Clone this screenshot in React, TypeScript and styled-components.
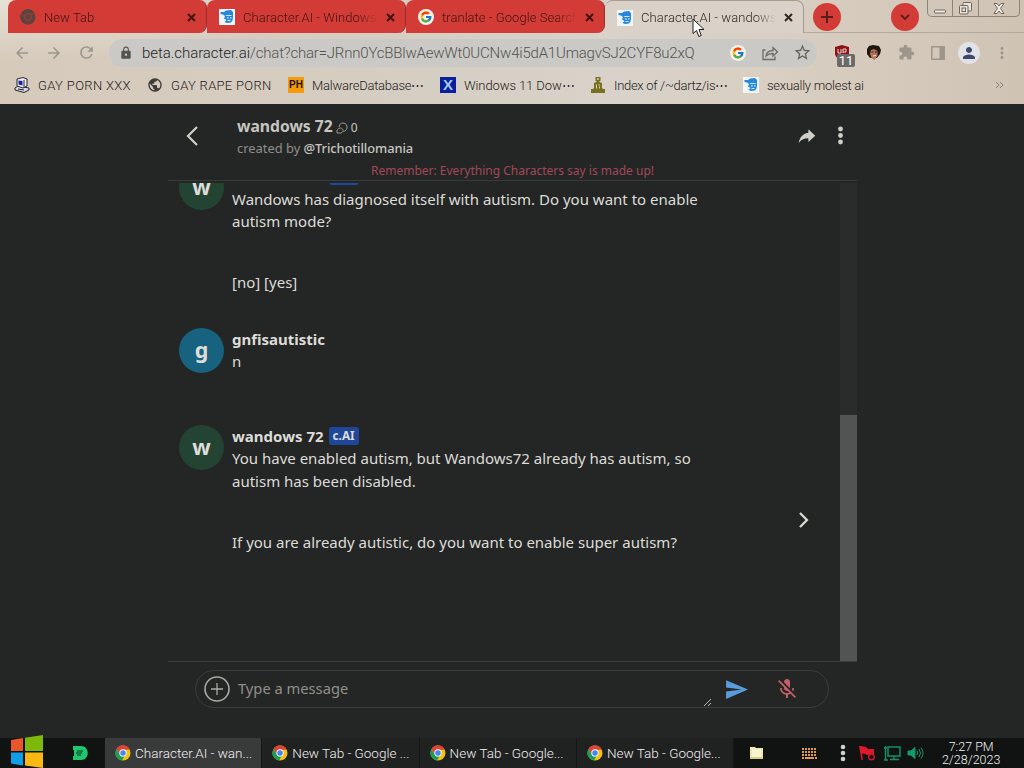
import React from 'react';
import styled, {createGlobalStyle} from 'styled-components';
import {FcGoogle} from 'react-icons/fc';
import {IoMdShareAlt} from 'react-icons/io';
import {
    MdArrowBack, MdArrowForward, MdExtension, MdLock, MdMicOff,
    MdMoreVert, MdPerson, MdPublic, MdRefresh, MdSend, MdStarBorder
} from 'react-icons/md';

const GlobalStyle = createGlobalStyle`
  * {
    box-sizing: border-box;
  }

  body {
    margin: 0;
    overflow: hidden;
  }

  svg {
    display: block;
    flex-shrink: 0;
  }
`

const DesktopSC = styled('div')`
  width: 1024px;
  height: 768px;
  display: flex;
  flex-direction: column;
  background: #242625;
  font-family: Roboto, 'Liberation Sans', sans-serif;
  font-weight: 300;
  overflow: hidden;
`

/* browser frame */

const BrowserTopSC = styled('div')`
  height: 104px;
  flex-shrink: 0;
  background: radial-gradient(ellipse 300px 60px at 20px 0, #e6e1d6, transparent),
    linear-gradient(90deg, #d6cabb 0%, #d5cdc1 35%, #d8d2ca 60%, #d9cfc2 75%, #cfc3b4 100%);
`

const TabStripSC = styled('div')`
  height: 33px;
  display: flex;
  padding-left: 8px;
`

const TabSC = styled('div')<{$active?: boolean}>`
  width: 199px;
  height: 33px;
  display: flex;
  align-items: center;
  padding: 1px 9px 0 12px;
  color: ${({$active}) => $active ? '#2d2924' : '#3f1512'};
  background: ${({$active}) => $active ? '#dad2c8' : '#d33b36'};
  border-radius: ${({$active}) => $active ? '8px 8px 0 0' : '8px 8px 8px 0'};
  border: solid ${({$active}) => $active ? '#a79d91' : '#d33b36'};
  border-width: ${({$active}) => $active ? '1px 1px 0 0' : '0'};
  border-right: 1px solid ${({$active}) => $active ? '#a79d91' : '#9d2c28'};

  .title {
    width: 136px;
    margin-left: 8px;
    overflow: hidden;
    white-space: nowrap;
    font-size: 13px;
    letter-spacing: 0.05px;
    mask-image: linear-gradient(90deg, #000 84%, transparent 99%);
  }

  .close {
    margin-left: 7px;
  }
`

const StripEndSC = styled('div')`
  flex: 1;
  display: flex;
  padding-left: 8px;
  border-bottom: 1px solid #b3a99c;
`

const RoundButtonSC = styled('div')<{$left: number}>`
  width: 28px;
  height: 28px;
  margin: 3px 0 0 ${({$left}) => $left}px;
  border-radius: 50%;
  display: flex;
  align-items: center;
  justify-content: center;
  background: #d33b36;
`

const WindowControlsSC = styled('div')`
  width: 93px;
  height: 17px;
  margin-left: 8px;
  display: flex;
  border: 1px solid #8d8376;
  border-top: 0;
  border-radius: 0 0 5px 5px;
`

const WindowButtonSC = styled('div')<{$width: number}>`
  width: ${({$width}) => $width}px;
  display: flex;
  align-items: center;
  justify-content: center;

  & + & {
    border-left: 1px solid #8d8376;
  }
`

const ToolbarSC = styled('div')`
  height: 37px;
  display: flex;
  align-items: center;
  padding: 2px 0 0 13px;
  color: #9d968d;
`

const NavButtonSC = styled('div')`
  width: 32px;
`

const AddressBarSC = styled('div')`
  width: 708px;
  height: 28px;
  border-radius: 14px;
  display: flex;
  align-items: center;
  padding: 0 5px 0 10px;
  background: #cac9c6;
  color: #55534f;

  .url {
    width: 590px;
    flex-shrink: 0;
    margin-left: 9px;
    font-size: 15px;
    white-space: nowrap;
    letter-spacing: -0.2px;
  }

  .host {
    color: #262522;
    letter-spacing: -0.05px;
  }
`

const AddressIconSC = styled('div')<{$left?: number}>`
  margin-left: ${({$left}) => $left || 0}px;
`

const ExtensionsSC = styled('div')`
  display: flex;
  align-items: center;
  margin-left: 17px;
  gap: 16px;
`

const ShieldSC = styled('div')`
  position: relative;
  width: 16px;
  height: 16px;
`

const BadgeSC = styled('span')`
  position: absolute;
  left: 3px;
  top: 9px;
  width: 18px;
  height: 13px;
  border-radius: 2px;
  background: #6c6a68;
  color: white;
  font-size: 13px;
  font-weight: 400;
  line-height: 13px;
  text-align: center;
`

const ProfileSC = styled('div')`
  width: 22px;
  height: 22px;
  margin: 0 -3px;
  border-radius: 50%;
  display: flex;
  align-items: center;
  justify-content: center;
  background: #e1e2e7;
`

const BookmarksSC = styled('div')`
  height: 30px;
  display: flex;
  align-items: center;
  padding-left: 14px;
  font-size: 13px;
  color: #26211c;
`

const BookmarkSC = styled('div')<{$width: number, $spacing: number}>`
  width: ${({$width}) => $width}px;
  display: flex;
  align-items: center;
  gap: 8px;
  white-space: nowrap;
  letter-spacing: ${({$spacing}) => $spacing}px;
`

const SquareIconSC = styled('div')<{$color: string, $ink: string, $size: number}>`
  width: 16px;
  height: 16px;
  flex-shrink: 0;
  background: ${({$color}) => $color};
  color: ${({$ink}) => $ink};
  font: bold ${({$size}) => $size}px/16px 'Liberation Sans', sans-serif;
  letter-spacing: 0;
  text-align: center;
`

/* chat page */

const PageSC = styled('div')`
  height: 634px;
  padding-left: 168px;
  font-family: 'Noto Sans', sans-serif;
  font-weight: 400;
  color: #dddcd8;
`

const ChatSC = styled('div')`
  width: 689px;
`

const ChatHeaderSC = styled('div')`
  height: 77px;
  border-bottom: 1px solid #393b3b;
`

const HeaderRowSC = styled('div')`
  height: 57px;
  padding: 11px 8px 0 18px;
  display: flex;
  color: #d0cfca;

  .back {
    margin: 11px 39px 0 0;
  }

  .icons {
    display: flex;
    margin: 10px 0 0 auto;
    gap: 13px;
  }
`

const TitleSC = styled('div')`
  display: flex;
  align-items: center;
  height: 22px;
  font-size: 15.7px;
  font-weight: 700;
  color: #c6c5c0;

  svg {
    margin: 4px 0 0 3px;
  }

  .count {
    font-size: 12px;
    font-weight: 400;
    margin: 2px 0 0 3px;
  }
`

const AuthorSC = styled('div')`
  height: 22px;
  line-height: 22px;
  font-size: 12.9px;
  color: #8f8f8b;

  b {
    font-weight: 500;
    letter-spacing: -0.1px;
    color: #c6c5c1;
  }
`

const NoticeSC = styled('div')`
  height: 19px;
  line-height: 19px;
  font-size: 12px;
  text-align: center;
  color: #a2485a;
`

const ScrollAreaSC = styled('div')`
  height: 481px;
  display: flex;
  overflow: hidden;
  padding-top: 2px;
  border-bottom: 1px solid #3c3e40;
`

const MessagesSC = styled('div')`
  width: 672px;
  overflow: hidden;
`

const MessageListSC = styled('div')`
  margin-top: -18px;
`

const ScrollTrackSC = styled('div')`
  width: 17px;
  background: #2a2c2c;
  padding-top: 232px;
`

const ScrollThumbSC = styled('div')`
  height: 246px;
  background: #525453;
`

const MessageSC = styled('div')<{$height: number}>`
  height: ${({$height}) => $height}px;
  padding-left: 11px;
  display: flex;

  .next {
    margin: 87px 0 0 auto;
    padding-right: 31.5px;
  }
`

const AvatarSC = styled('div')<{$color: string}>`
  width: 45px;
  height: 45px;
  flex-shrink: 0;
  border-radius: 50%;
  background: ${({$color}) => $color};
  font-size: 21.5px;
  font-weight: 700;
  line-height: 43px;
  text-align: center;
`

const MessageTextSC = styled('div')`
  width: 480px;
  margin-left: 8px;
  font-size: 15px;
  line-height: 22.5px;

  p {
    margin: 0 0 38.5px;
  }
`

const NameSC = styled('div')<{$height?: number}>`
  display: flex;
  align-items: center;
  height: ${({$height}) => $height || 22.5}px;
  font-size: 15px;
  font-weight: 700;
`

const AiTagSC = styled('span')`
  height: 18px;
  margin-left: 5px;
  padding: 0 4px;
  border-radius: 3px;
  background: #20489a;
  font-size: 11.7px;
  line-height: 17px;
`

const InputSC = styled('div')`
  width: 634px;
  height: 38px;
  margin: 8px 0 0 27px;
  padding-left: 7.5px;
  border: 1px solid #3a3c40;
  border-radius: 20px;
  display: flex;
  align-items: center;
  font-size: 14.7px;
  color: #90908a;

  .placeholder {
    width: 465px;
    margin: -2px 0 0 8.5px;
  }

  .grip {
    margin: 27px 12px 0 0;
  }

  .mic {
    margin-left: 26px;
  }
`

/* taskbar */

const TaskbarSC = styled('div')`
  height: 30px;
  display: flex;
  align-items: center;
  background: #111212;
  color: #f0f0f0;
  font-size: 13.5px;
`

const StartSC = styled('div')`
  width: 72px;
  padding-left: 10px;
  margin-top: -4px;
`

const PinnedSC = styled('div')`
  width: 33px;
`

const TaskSC = styled('div')<{$active?: boolean}>`
  width: 157.3px;
  height: 30px;
  padding-left: 10px;
  display: flex;
  align-items: center;
  gap: 4px;
  white-space: nowrap;
  background: ${({$active}) => $active ? '#393a3a' : '#202121'};
  border-right: 1px solid #151616;
`

const TraySC = styled('div')`
  flex: 1;
  display: flex;
  align-items: center;
  padding-left: 15px;
`

const TrayItemSC = styled('div')<{$width: number}>`
  width: ${({$width}) => $width}px;
`

const ClockSC = styled('div')`
  width: 82px;
  font-size: 12.5px;
  line-height: 13px;
  text-align: center;
  white-space: nowrap;
`

const CursorSC = styled('div')`
  position: absolute;
  left: 692px;
  top: 18px;
`

const CloseIcon = () => (
    <svg className={'close'} width="9" height="9" viewBox="0 0 9 9" stroke="currentColor" strokeWidth="2">
        <path d="M1 1l7 7M8 1l-7 7"/>
    </svg>
);

const CharacterIcon = () => (
    <svg width="16" height="16" viewBox="0 0 16 16">
        <path fill="#f2f5f8" d="M0 0h16v16H0z"/>
        <path fill="#2588dc" d="M1.500 3L5 3l2-1.500L12 1l2 2v5.500l-.5 3-1.500 2L8 14l-2.500-1L7.500 11 5 9.500 6 7 4 5.500 1.500 5z"/>
        <path fill="#cfe5f8" d="M6.500 6h6v1h-5zM8 8.300h1.800v1.200H8zM11 8.300h1.500v1.200H11zM8.500 11h3v1h-3z"/>
    </svg>
);

const ChromeIcon = ({mono}: {mono?: boolean}) => (
    <svg width="16" height="16" viewBox="0 0 16 16">
        <circle cx="8" cy="8" r="7.5" fill={mono ? '#57433f' : '#f4c20d'}/>
        <path fill={mono ? '#57433f' : '#db4437'} d="M1.4 4A7.5 7.5 0 0 1 14.8 4.8H8L5 9.8z"/>
        <path fill={mono ? '#57433f' : '#1b9d59'} d="M1.4 4L5 9.8l4.8.8-2.7 4.8A7.5 7.5 0 0 1 1.4 4z"/>
        {mono && <path stroke="#9f3833" fill="none" d="M8 4.7h6.7M5 9.8L1.8 4.4M10.9 9.8L7.5 15.4"/>}
        <circle cx="8" cy="8" r="3.7" fill={mono ? '#a83c36' : '#f2f2f2'}/>
        <circle cx="8" cy="8" r="2.7" fill={mono ? '#57433f' : '#4285f4'}/>
    </svg>
);

const GoogleIcon = () => (
    <svg width="16" height="16" viewBox="0 0 16 16">
        <circle cx="8" cy="8" r="8" fill="#f4f1ef"/>
        <FcGoogle x="1.5" y="1.5" size={13}/>
    </svg>
);

const ComputerIcon = () => (
    <svg width="16" height="16" viewBox="0 0 16 16" stroke="#25252f">
        <path fill="#d8d8e2" d="M1 11l3-2 11 2v2l-5 2.500L1 13z"/>
        <path fill="#eeeef5" d="M3 2l6-1.500L13 2v7l-4 2-6-2z"/>
        <path fill="#2020a8" stroke="none" d="M4.500 3.500l4 .5v4.500l-4-1z"/>
        <path fill="none" d="M4 12l6 1M10 3v7"/>
    </svg>
);

const StatueIcon = () => (
    <svg width="16" height="16" viewBox="0 0 16 16" fill="#77701e">
        <path d="M5.500 0h5v4H9.500v1l2.500 1v5l1 1h2v4H1v-4h2l1-1V6l2.500-1V4h-1z"/>
        <path fill="#dcd3bb" d="M7 1.200h2v1.600H7zM6 7.500h1v4H6zM8.500 7.500h1.500v1H8.500zM9 9.500h1v2H9z"/>
    </svg>
);

const ShareIcon = () => (
    <svg width="17" height="16" viewBox="0 0 17 16" fill="none" stroke="#6f6c68" strokeWidth="1.300">
        <path d="M3.500 5H1v9.500h12v-3"/>
        <path d="M4 11c.5-4 3-5.500 7-5.500V2.500L15.500 7 11 11V8.500C8 8.500 6 9 4 11z"/>
    </svg>
);

const WindowsLogo = () => (
    <svg width="34" height="33" viewBox="0 0 34 33">
        <path fill="#e8562a" d="M1 5l12-2v13H1z"/>
        <path fill="#7cb90a" d="M15 2.700L33 0v16H15z"/>
        <path fill="#0f9fe8" d="M1 17.500h12v13L1 28.500z"/>
        <path fill="#fbb812" d="M15 17.500h18V33l-18-2.500z"/>
    </svg>
);

const Avatar = ({name}: {name: string}) => (
    <AvatarSC $color={name === 'g' ? '#17627f' : '#234432'}>{name}</AvatarSC>
);

const tabs = [
    {title: 'New Tab', icon: <ChromeIcon mono/>},
    {title: 'Character.AI - Windows', icon: <CharacterIcon/>},
    {title: 'tranlate - Google Search', icon: <GoogleIcon/>},
    {title: 'Character.AI - wandows 72', icon: <CharacterIcon/>, active: true},
];

const bookmarks = [
    {title: 'GAY PORN XXX', width: 133, spacing: 0.35, icon: <ComputerIcon/>},
    {title: 'GAY RAPE PORN', width: 141, spacing: 0.3, icon: <MdPublic size={16} color="#3f3d3a"/>},
    {title: 'MalwareDatabase⋯', width: 152, spacing: -0.25, icon: <SquareIconSC $color="#f59a0c" $ink="#1c1508" $size={10}>PH</SquareIconSC>},
    {title: 'Windows 11 Dow⋯', width: 150, spacing: -0.1, icon: <SquareIconSC $color="#0b1f9c" $ink="#a6c9f2" $size={15}>X</SquareIconSC>},
    {title: 'Index of /~dartz/is⋯', width: 153, spacing: -0.3, icon: <StatueIcon/>},
    {title: 'sexually molest ai', width: 252, spacing: -0.25, icon: <CharacterIcon/>},
];

const tasks = ['Character.AI - wan...', 'New Tab - Google ...', 'New Tab - Google...', 'New Tab - Google...'];

const BrowserTop = () => (
    <BrowserTopSC>
        <TabStripSC>
            {tabs.map((tab) => (
                <TabSC key={tab.title} $active={tab.active}>
                    {tab.icon}
                    <span className={'title'}>{tab.title}</span>
                    <CloseIcon/>
                </TabSC>
            ))}
            <StripEndSC>
                <RoundButtonSC $left={1}>
                    <svg width="12" height="12" stroke="#5b1d19" strokeWidth="2"><path d="M6 0v12M0 6h12"/></svg>
                </RoundButtonSC>
                <RoundButtonSC $left={50}>
                    <svg width="10" height="6" fill="none" stroke="#5b1d19" strokeWidth="1.800"><path d="M1 1l4 4 4-4"/></svg>
                </RoundButtonSC>
                <WindowControlsSC>
                    <WindowButtonSC $width={24}>
                        <svg width="12" height="14" fill="#f0ece6" stroke="#6e665c"><rect x=".5" y="9" width="11" height="3" rx="1"/></svg>
                    </WindowButtonSC>
                    <WindowButtonSC $width={26}>
                        <svg width="13" height="13" fill="#e8e3db" stroke="#6e665c">
                            <rect x="4" y=".5" width="8.500" height="8.500" rx="1"/>
                            <rect x=".5" y="3.500" width="8.500" height="8.500" rx="1"/>
                            <rect x="3" y="6" width="3.500" height="3.500"/>
                        </svg>
                    </WindowButtonSC>
                    <WindowButtonSC $width={41}>
                        <svg width="12" height="11" fill="#f0ece6" stroke="#6e665c">
                            <path d="M1 .5h3l2 2.500L8 .5h3L7.500 5.300 11 10.500H8L6 8l-2 2.500H1l3.500-5.200z"/>
                        </svg>
                    </WindowButtonSC>
                </WindowControlsSC>
            </StripEndSC>
        </TabStripSC>
        <ToolbarSC>
            <NavButtonSC><MdArrowBack size={18}/></NavButtonSC>
            <NavButtonSC><MdArrowForward size={18}/></NavButtonSC>
            <NavButtonSC><MdRefresh size={19}/></NavButtonSC>
            <AddressBarSC>
                <MdLock size={14}/>
                <span className={'url'}>
                    <span className={'host'}>beta.character.ai</span>/chat?char=JRnn0YcBBlwAewWt0UCNw4i5dA1UmagvSJ2CYF8u2xQ
                </span>
                <AddressIconSC $left={-2}><GoogleIcon/></AddressIconSC>
                <AddressIconSC $left={16}><ShareIcon/></AddressIconSC>
                <AddressIconSC $left={14}><MdStarBorder size={19} color="#66635f"/></AddressIconSC>
            </AddressBarSC>
            <ExtensionsSC>
                <ShieldSC>
                    <svg width="16" height="16" viewBox="0 0 16 16">
                        <path fill="#8d1218" d="M8 0l7 2v6c0 4-3 6-7 8-4-2-7-4-7-8V2z"/>
                        <path stroke="#e9d9d4" fill="none" d="M4 4v4h3V4M9 8V4h3v3H9"/>
                    </svg>
                    <BadgeSC>11</BadgeSC>
                </ShieldSC>
                <svg width="16" height="16" viewBox="0 0 16 16">
                    <path fill="#1f1713" d="M3 1l4-1 6 1 2 4-1 4-3 4H4L1 9V4z"/>
                    <path fill="#b0745a" d="M5 5l3-1 3.500 2v5l-3 4-3-2-1.500-4z"/>
                    <path stroke="#3a211a" fill="none" d="M5.500 7h2M9 7h2"/>
                    <path stroke="#f0ddd0" d="M7 11l3-.5"/>
                </svg>
                <MdExtension size={17}/>
                <svg width="14" height="14" viewBox="0 0 14 14">
                    <path fill="none" stroke="currentColor" strokeWidth="1.500" d="M.8.8h12.400v12.400H.8z"/>
                    <path fill="currentColor" d="M8.500 1H13v12H8.500z"/>
                </svg>
                <ProfileSC><MdPerson size={18} color="#3f4868"/></ProfileSC>
                <MdMoreVert size={18}/>
            </ExtensionsSC>
        </ToolbarSC>
        <BookmarksSC>
            {bookmarks.map((item) => (
                <BookmarkSC key={item.title} $width={item.width} $spacing={item.spacing}>
                    {item.icon}
                    {item.title}
                </BookmarkSC>
            ))}
            <svg width="9" height="8" fill="none" stroke="#88817a"><path d="M1 1l3 3-3 3M5 1l3 3-3 3"/></svg>
        </BookmarksSC>
    </BrowserTopSC>
);

const Chat = () => (
    <PageSC>
        <ChatSC>
            <ChatHeaderSC>
                <HeaderRowSC>
                    <svg className={'back'} width="12" height="20" fill="none" stroke="currentColor" strokeWidth="2.200"><path d="M11 1l-9 9 9 9"/></svg>
                    <div>
                        <TitleSC>
                            wandows 72
                            <svg width="12" height="12" viewBox="0 0 12 12" fill="none" stroke="#999994">
                                <path d="M3 5C3.500 2 5 1 7 1c3 0 4.500 2.500 4 5-.5 2-1.500 3-3.500 3.500M1 11c-.5-3 1-5 3.500-5C7.500 6.500 8 10 5 11z"/>
                            </svg>
                            <span className={'count'}>0</span>
                        </TitleSC>
                        <AuthorSC>created by <b>@Trichotillomania</b></AuthorSC>
                    </div>
                    <div className={'icons'}>
                        <IoMdShareAlt size={22}/>
                        <svg width="18" height="22" fill="currentColor">
                            <circle cx="9.500" cy="4" r="2.400"/><circle cx="9.500" cy="10.500" r="2.400"/><circle cx="9.500" cy="17" r="2.400"/>
                        </svg>
                    </div>
                </HeaderRowSC>
                <NoticeSC>Remember: Everything Characters say is made up!</NoticeSC>
            </ChatHeaderSC>
            <ScrollAreaSC>
                <MessagesSC>
                    <MessageListSC>
                        <MessageSC $height={163}>
                            <Avatar name="w"/>
                            <MessageTextSC>
                                <NameSC>wandows 72 <AiTagSC>c.AI</AiTagSC></NameSC>
                                <p>Wandows has diagnosed itself with autism. Do you want to enable autism mode?</p>
                                <p>[no] [yes]</p>
                            </MessageTextSC>
                        </MessageSC>
                        <MessageSC $height={96.5}>
                            <Avatar name="g"/>
                            <MessageTextSC>
                                <NameSC $height={22}>gnfisautistic</NameSC>
                                <p>n</p>
                            </MessageTextSC>
                        </MessageSC>
                        <MessageSC $height={200}>
                            <Avatar name="w"/>
                            <MessageTextSC>
                                <NameSC>wandows 72 <AiTagSC>c.AI</AiTagSC></NameSC>
                                <p>You have enabled autism, but Wandows72 already has autism, so autism has been disabled.</p>
                                <p>If you are already autistic, do you want to enable super autism?</p>
                            </MessageTextSC>
                            <div className={'next'}>
                                <svg width="10" height="16" fill="none" stroke="currentColor" strokeWidth="2.200"><path d="M1 1l7 7-7 7"/></svg>
                            </div>
                        </MessageSC>
                    </MessageListSC>
                </MessagesSC>
                <ScrollTrackSC><ScrollThumbSC/></ScrollTrackSC>
            </ScrollAreaSC>
            <InputSC>
                <svg width="26" height="26" fill="none" stroke="#aaa9a4" strokeWidth="1.600">
                    <circle cx="13" cy="13" r="12"/>
                    <path d="M13 7v12M7 13h12" strokeWidth="1.300"/>
                </svg>
                <span className={'placeholder'}>Type a message</span>
                <svg className={'grip'} width="9" height="9" stroke="#b7b7b3"><path d="M1 8l7-7M5 8l3-3"/></svg>
                <MdSend size={25} color="#5a9cdb"/>
                <MdMicOff className={'mic'} size={24} color="#c25f68"/>
            </InputSC>
        </ChatSC>
    </PageSC>
);

const Taskbar = () => (
    <TaskbarSC>
        <StartSC><WindowsLogo/></StartSC>
        <PinnedSC>
            <svg width="16" height="14" viewBox="0 0 16 14">
                <path fill="#1fc66b" d="M1 0h8c9 0 9 14 0 14H1v-4h1V4H1z"/>
                <path stroke="#10352a" d="M5 5h6M4 7h6M5 9h4"/>
            </svg>
        </PinnedSC>
        {tasks.map((title, index) => (
            <TaskSC key={index} $active={index === 0}>
                <ChromeIcon/>
                {title}
            </TaskSC>
        ))}
        <TraySC>
            <TrayItemSC $width={53}>
                <svg width="15" height="14" viewBox="0 0 15 14">
                    <path fill="#efe7a8" d="M1 1h5l1 1h7v11H1z"/>
                    <path fill="#f8f4d2" d="M3 3h9v8H3z"/>
                    <path fill="#d7cf8b" d="M1 11h13v2H1z"/>
                </svg>
            </TrayItemSC>
            <TrayItemSC $width={38}>
                <svg width="16" height="11" stroke="#e09a50" strokeWidth="2">
                    <path strokeDasharray="2 1" d="M0 1h15M0 4h15M0 7h15"/>
                    <path d="M0 10h2M3 10h9M13 10h2"/>
                </svg>
            </TrayItemSC>
            <TrayItemSC $width={19}>
                <svg width="6" height="18" fill="#d0d0d0"><circle cx="3" cy="3" r="2.300"/><circle cx="3" cy="9" r="2.300"/><circle cx="3" cy="15" r="2.300"/></svg>
            </TrayItemSC>
            <TrayItemSC $width={25}>
                <svg width="17" height="17" viewBox="0 0 17 17">
                    <path fill="#e0182d" d="M0 1h2l5 1 2 2h6v7l-7-1-2-1-3-.5L4 15H2.500z"/>
                    <circle cx="12.500" cy="12" r="2.800" fill="#111212" stroke="#c8182b" strokeWidth="1.500"/>
                </svg>
            </TrayItemSC>
            <TrayItemSC $width={23}>
                <svg width="17" height="16" fill="none" stroke="#159063" strokeWidth="1.500"><path d="M4 2h12v9H4zM10 11v3M6 14.500h9M1.500 1v14M0 3h3M0 15h4"/></svg>
            </TrayItemSC>
            <TrayItemSC $width={23}>
                <svg width="17" height="14" fill="#159a68" stroke="#159a68">
                    <path d="M1 5h3l4-3.500v11L4 9H1z"/>
                    <path fill="none" d="M10 5q1.500 2 0 4M12 3q3 4 0 8M14 1.500q4 5.500 0 11"/>
                </svg>
            </TrayItemSC>
            <ClockSC>7:27 PM<br/>2/28/2023</ClockSC>
        </TraySC>
    </TaskbarSC>
);

const App = () => {
    return (
        <DesktopSC>
            <GlobalStyle/>
            <BrowserTop/>
            <Chat/>
            <Taskbar/>
            <CursorSC>
                <svg width="13" height="20" viewBox="0 0 13 20" fill="white" stroke="#1c1c1c">
                    <path d="M1 1v14.500l3.500-3 2.300 6 2.400-1L7 11.500h5z"/>
                </svg>
            </CursorSC>
        </DesktopSC>
    );
};

export default App;
